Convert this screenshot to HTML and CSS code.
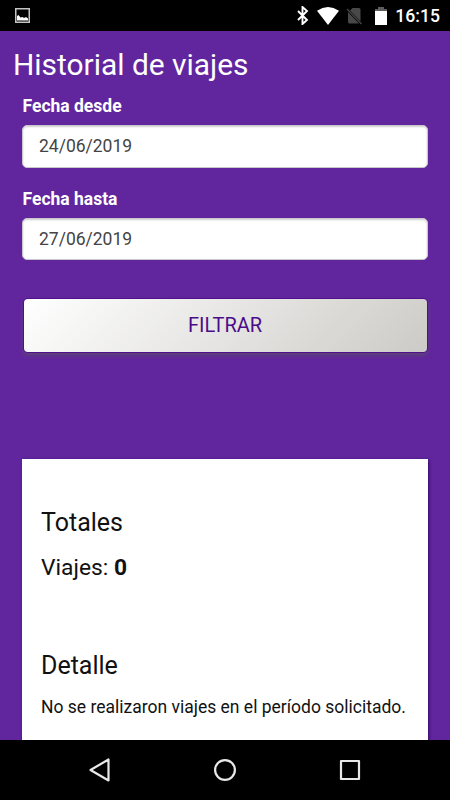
FILE: index.html
```html
<!DOCTYPE html>
<html lang="es">
<head>
  <meta charset="UTF-8">
  <title>Historial de viajes</title>
  <link rel="stylesheet" href="styles.css">
</head>
<body>
  <div class="status-bar">
    <svg class="picture-icon" width="15" height="15" viewBox="0 0 15 15">
      <rect x="0.75" y="0.75" width="13.5" height="13.5" fill="none" stroke="#c4c4c4" stroke-width="1.5"/>
      <path d="M2 12.500V8l1.500-1 2 2.500 2-.5L9 10l2-1 2 1.500v2z" fill="#fff"/>
    </svg>
    <div class="status-icons">
      <svg class="bluetooth" width="12" height="19" viewBox="0 0 12 19">
        <path d="M1 5l9 9-4.500 4V1L10 5l-9 9" fill="none" stroke="#fff" stroke-width="1.900"/>
      </svg>
      <svg class="wifi" width="22" height="18" viewBox="0 0 22 18">
        <path d="M0 3.700Q11-3.700 22 3.700L11 18z" fill="#fff"/>
      </svg>
      <svg class="no-sim" width="17" height="18" viewBox="0 0 17 18">
        <path d="M6.500 1H13q1.500 0 1.500 1.500v12L4 3.500zM2 5l11 11.500H3.500Q2 16.500 2 15z" fill="#484848"/>
        <path d="M1 2l14.500 15" fill="none" stroke="#484848" stroke-width="1.300"/>
      </svg>
      <svg class="battery" width="12" height="18" viewBox="0 0 12 18">
        <path d="M0 4V2h3V0h6v2h3v2z" fill="#5c5c5c"/>
        <path d="M0 4h12v14H0z" fill="#fff"/>
      </svg>
      <span class="clock">16:15</span>
    </div>
  </div>

  <main class="page">
    <h1>Historial de viajes</h1>

    <form class="filters">
      <label for="desde">Fecha desde</label>
      <input type="text" id="desde" value="24/06/2019">

      <label for="hasta">Fecha hasta</label>
      <input type="text" id="hasta" value="27/06/2019">

      <button type="button">FILTRAR</button>
    </form>

    <div class="results">
      <h2>Totales</h2>
      <p class="total">Viajes: <b>0</b></p>
      <h2 class="detail-title">Detalle</h2>
      <p class="detail">No se realizaron viajes en el período solicitado.</p>
    </div>
  </main>

  <div class="nav-bar">
    <svg width="24" height="26" viewBox="0 0 24 26">
      <path d="M20.500 2.500v21L2.500 13z" fill="none" stroke="#e8e8e8" stroke-width="2.200" stroke-linejoin="round"/>
    </svg>
    <svg width="24" height="24" viewBox="0 0 24 24">
      <circle cx="12" cy="12" r="9.900" fill="none" stroke="#e8e8e8" stroke-width="2.200"/>
    </svg>
    <svg width="24" height="24" viewBox="0 0 24 24">
      <rect x="3" y="3" width="18" height="18" fill="none" stroke="#e8e8e8" stroke-width="2.200" stroke-linejoin="round"/>
    </svg>
  </div>
</body>
</html>
```
FILE: styles.css
```css
* {
  box-sizing: border-box;
}

body {
  margin: 0;
  height: 800px;
  display: flex;
  flex-direction: column;
  overflow: hidden;
  background: #61269e;
  font-family: Roboto, sans-serif;
}

h1, h2, p {
  margin: 0;
  font-weight: 400;
}

.status-bar {
  flex: none;
  height: 31px;
  padding: 0 10px 0 15px;
  display: flex;
  justify-content: space-between;
  align-items: center;
  background: #000;
}

.status-icons {
  display: flex;
  align-items: center;
}

.wifi {
  margin-left: 8px;
}

.no-sim {
  margin-left: 7px;
}

.battery {
  margin-left: 12px;
}

.clock {
  margin-left: 8px;
  color: #fff;
  font-size: 17.6px;
  font-weight: 500;
  line-height: 31px;
  padding-top: 1px;
}

.page {
  height: 709px;
  overflow: hidden;
  color: #fff;
}

h1 {
  padding: 16px 13px 0;
  font-size: 29.9px;
  line-height: 36px;
}

.filters {
  padding: 10px 22px 0;
}

label {
  display: block;
  height: 32px;
  padding-left: 0.5px;
  font-size: 17.5px;
  font-weight: 700;
  line-height: 27px;
}

input {
  display: block;
  width: 406px;
  height: 42.5px;
  margin-bottom: 18px;
  padding: 0 16px;
  border: 1px solid #c9c6cc;
  border-radius: 5px;
  background: #fff;
  box-shadow: inset 0 1px 2px rgba(0, 0, 0, 0.2);
  color: #444;
  font-family: inherit;
  font-size: 17.5px;
}

button {
  display: block;
  width: 403px;
  height: 53px;
  margin: 39px 1.5px 0;
  padding: 0 0 1px;
  border: 0;
  border-radius: 4px;
  background: linear-gradient(135deg, #fff, #cccbc7);
  box-shadow: 0 0 0 1px #50108c, 0 3px 5px rgba(90, 90, 90, 0.7);
  color: #4b0c8a;
  font-family: inherit;
  font-size: 20px;
}

.results {
  width: 406px;
  height: 400px;
  margin: 107px 22px 0;
  padding: 48px 19px 0;
  background: #fff;
  box-shadow: 1px 1px 3px rgba(40, 0, 90, 0.8);
  color: #111;
}

h2 {
  font-size: 25px;
  line-height: 32px;
}

.total {
  margin-top: 14px;
  font-size: 22.8px;
  line-height: 30px;
}

.detail-title {
  margin-top: 67px;
}

.detail {
  margin-top: 13px;
  font-size: 17.5px;
  line-height: 24px;
  white-space: nowrap;
}

.nav-bar {
  flex: none;
  height: 60px;
  padding: 0 88px;
  display: flex;
  justify-content: space-between;
  align-items: center;
  background: #000;
}
```
